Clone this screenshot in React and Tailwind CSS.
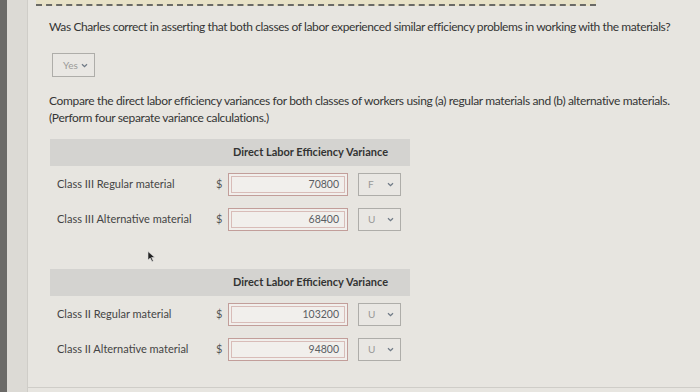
import { useState } from "react";

const rowsA = [
  { label: "Class III Regular material", value: "70800", type: "F" },
  { label: "Class III Alternative material", value: "68400", type: "U" },
];

const rowsB = [
  { label: "Class II Regular material", value: "103200", type: "U" },
  { label: "Class II Alternative material", value: "94800", type: "U" },
];

function Chevron() {
  return (
    <svg width="7" height="5" viewBox="0 0 7 5" className="shrink-0">
      <path d="M1 1.2 L3.5 3.6 L6 1.2" fill="none" stroke="#6f7a86" strokeWidth="1.3" />
    </svg>
  );
}

function SmallSelect({ value, className }) {
  return (
    <div
      className={
        "flex items-center justify-between border border-[#aeada9] bg-[#e9e7e3] pr-[6px] text-[10px] text-[#9a9a98] " +
        className
      }
    >
      <span>{value}</span>
      <Chevron />
    </div>
  );
}

function VarianceTable({ rows }) {
  return (
    <div className="ml-[22px] w-[360px]">
      <div className="h-[27px] bg-[#d4d3d0] grid grid-cols-[178px_173px] items-center">
        <div />
        <div className="text-center text-[11px] font-bold text-[#333] pr-[8px] whitespace-nowrap">
          Direct Labor Efficiency Variance
        </div>
      </div>
      <div className="flex flex-col gap-[12px] mt-[7px]">
        {rows.map((r) => (
          <div key={r.label} className="grid grid-cols-[166px_12px_120px_53px] items-center h-[23px]">
            <div className="pl-[7px] text-[11px] text-[#444] whitespace-nowrap">{r.label}</div>
            <div className="text-[11px] text-[#555]">$</div>
            <div className="h-[23px] border border-[#c29e9a] bg-[#f1efec] shadow-[inset_0_0_0_2px_#f1efec,inset_0_0_0_3px_#d8bcb8] flex items-center justify-end pr-[8px] text-[10.5px] text-[#5a5d62]">
              {r.value}
            </div>
            <SmallSelect value={r.type} className="h-[23px] ml-[10px] w-[43px] pl-[9px]" />
          </div>
        ))}
      </div>
    </div>
  );
}

export default function App() {
  const [answer] = useState("Yes");
  return (
    <div className="relative w-[700px] h-[392px] flex overflow-hidden bg-[#e7e5e0] font-['Lato','Liberation_Sans',sans-serif]">
      <div className="w-[7px] bg-[#6b6a68]" />
      <div className="w-[21px] bg-[#dcdad5] border-r border-[#cfcdc8]" />
      <div className="flex-1 flex flex-col">
        <div className="ml-[8px] w-[560px] h-[6px] bg-[#e8e2c8] border-b-2 border-dashed border-[#6a6a66]" />
        <p className="mt-[13px] pl-[21px] text-[12px] leading-[16px] text-[#353535] tracking-[-0.4px] whitespace-nowrap">
          Was Charles correct in asserting that both classes of labor experienced similar efficiency problems in working with the materials?
        </p>
        <SmallSelect value={answer} className="mt-[18px] ml-[24px] w-[43px] h-[24px] pl-[10px]" />
        <p className="mt-[15px] pl-[21px] text-[12px] leading-[17px] text-[#353535] tracking-[-0.35px] whitespace-nowrap">
          Compare the direct labor efficiency variances for both classes of workers using (a) regular materials and (b) alternative materials.
          <br />
          (Perform four separate variance calculations.)
        </p>
        <div className="mt-[13px]">
          <VarianceTable rows={rowsA} />
        </div>
        <div className="mt-[38px]">
          <VarianceTable rows={rowsB} />
        </div>
        <div className="mt-auto mb-[4px] border-t border-[#cfcdc8]" />
      </div>
      <svg className="absolute left-[147px] top-[251px]" width="9" height="11" viewBox="0 0 9 11">
        <path d="M1 0.5 L1 9 L3.2 7 L5 10.5 L6.3 9.9 L4.6 6.5 L7.6 6.3 Z" fill="#222" stroke="#ddd" strokeWidth="0.6" />
      </svg>
    </div>
  );
}
